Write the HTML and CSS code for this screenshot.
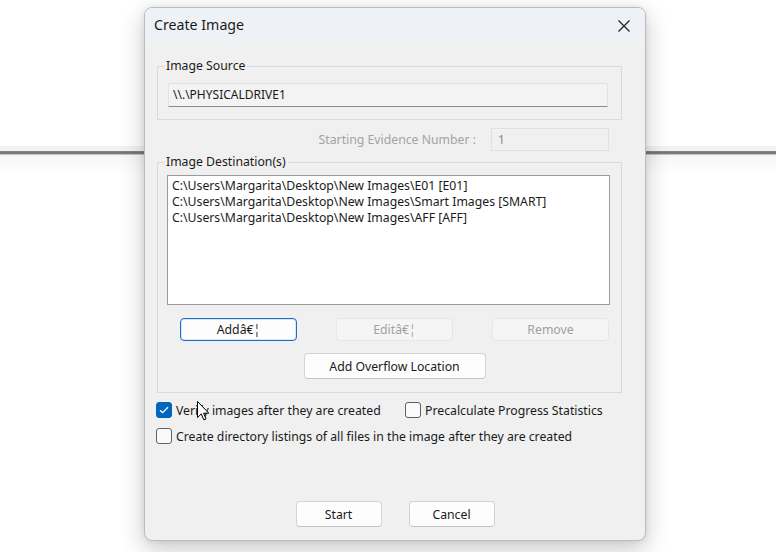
FILE: index.html
```html
<!DOCTYPE html>
<html>
<head>
<meta charset="utf-8">
<title>Create Image</title>
<link rel="stylesheet" href="styles.css">
</head>
<body>
<div class="dialog">
  <div class="titlebar">
    <span class="title">Create Image</span>
    <svg class="close" width="14" height="14" viewBox="0 0 14 14"><path d="M1.5 1.5 L12.5 12.5 M12.5 1.5 L1.5 12.5" stroke="#1f1f1f" stroke-width="1.2" fill="none"/></svg>
  </div>
  <div class="content">
    <fieldset class="group group-source">
      <legend>Image Source</legend>
      <div class="source-inner">
        <div class="textfield">\\.\PHYSICALDRIVE1</div>
      </div>
    </fieldset>
    <div class="evidence-row">
      <span class="evidence-label">Starting Evidence Number :</span>
      <div class="evidence-input">1</div>
    </div>
    <fieldset class="group group-dest">
      <legend>Image Destination(s)</legend>
      <div class="dest-inner">
        <div class="listbox">
          <div class="item">C:\Users\Margarita\Desktop\New Images\E01 [E01]</div>
          <div class="item">C:\Users\Margarita\Desktop\New Images\Smart Images [SMART]</div>
          <div class="item">C:\Users\Margarita\Desktop\New Images\AFF [AFF]</div>
        </div>
        <div class="btn-area">
          <div class="btn-row">
            <div class="btn btn-focus btn-list">Addâ€¦</div>
            <div class="btn btn-disabled btn-list">Editâ€¦</div>
            <div class="btn btn-disabled btn-list">Remove</div>
          </div>
          <div class="overflow-row">
            <div class="btn btn-overflow">Add Overflow Location</div>
          </div>
        </div>
      </div>
    </fieldset>
    <div class="checks">
      <div class="check-row">
        <label class="check check-verify"><span class="box checked"><svg width="10" height="8" viewBox="0 0 10 8"><path d="M1 4.2 L3.6 6.6 L9 1.2" stroke="#fff" stroke-width="1.3" fill="none"/></svg></span><span>Verify images after they are created</span></label>
        <label class="check check-precalc"><span class="box"></span><span>Precalculate Progress Statistics</span></label>
      </div>
      <div class="check-row">
        <label class="check"><span class="box"></span><span>Create directory listings of all files in the image after they are created</span></label>
      </div>
      <svg class="cursor" width="13" height="21" viewBox="0 0 13 21"><path d="M0.5 0.5 L0.5 16.5 L4.3 12.9 L6.8 18.8 L9 17.9 L6.6 12.2 L11.8 12.2 Z" fill="#fff" stroke="#000" stroke-width="1" stroke-linejoin="round"/></svg>
    </div>
    <div class="footer">
      <div class="btn btn-foot">Start</div>
      <div class="btn btn-foot">Cancel</div>
    </div>
  </div>
</div>
</body>
</html>
```
FILE: styles.css
```css
* { box-sizing: border-box; }
html, body { margin: 0; padding: 0; }
body {
  width: 776px;
  height: 552px;
  overflow: hidden;
  font-family: "Noto Sans", "Open Sans", sans-serif;
  font-size: 12px;
  color: #1a1a1a;
  background:
    linear-gradient(to bottom,
      #ffffff 0px, #ffffff 146px,
      #f2f2f2 146px, #f2f2f2 151px,
      #8a8a8a 151px, #6e6e6e 153px, #8a8a8a 154px,
      #f6f6f6 155px, #ffffff 175px, #ffffff 552px);
  padding-top: 7px;
  padding-left: 144px;
}
.dialog {
  width: 502px;
  height: 534px;
  background: #f0f0f0;
  border: 1px solid #bcbcbc;
  border-radius: 8px;
  box-shadow: 0 8px 24px rgba(0,0,0,0.22), 0 0 6px rgba(0,0,0,0.08);
  display: flex;
  flex-direction: column;
  overflow: hidden;
}
.titlebar {
  height: 36px;
  background: #eef1f5;
  display: flex;
  align-items: center;
  justify-content: space-between;
  padding: 0 14px 0 9px;
}
.title {
  font-size: 14.2px;
  color: #1a1a1a;
  padding-bottom: 3px;
}
.close { display: block; margin-top: 0px; }
.content {
  flex: 1;
  display: flex;
  flex-direction: column;
  padding: 14px 0 13px 12px;
}
.group {
  width: 465px;
  margin: 0;
  padding: 0;
  border: 1px solid #dadada;
  min-width: 0;
}
.group legend {
  margin-left: 6px;
  padding: 0 2px;
  line-height: 16px;
  font-size: 12.25px;
  color: #1a1a1a;
}
.source-inner { padding: 9px 13px 12px 10px; }
.textfield {
  height: 24px;
  width: 440px;
  background: #f3f3f3;
  border: 1px solid #e2e2e2;
  border-bottom: 1px solid #8a8a8a;
  border-radius: 3px 3px 0 0;
  padding: 0 0 0 4px;
  line-height: 22px;
  font-size: 12px;
}
.evidence-row {
  width: 465px;
  display: flex;
  justify-content: flex-end;
  align-items: center;
  gap: 15px;
  padding-right: 13px;
  margin-top: 8px;
}
.evidence-label { color: #a3a3a3; font-size: 12.25px; }
.evidence-input {
  width: 118px;
  height: 23px;
  border: 1px solid #e0e0e0;
  background: #f0f0f0;
  color: #8a8a8a;
  line-height: 21px;
  padding-left: 6px;
}
.group-dest { margin-top: 3px; }
.dest-inner { padding: 5px 11px 13px 9px; }
.listbox {
  width: 443px;
  height: 130px;
  background: #ffffff;
  border: 1px solid #9a9a9a;
  padding: 2px 0 0 4px;
}
.item {
  line-height: 16px;
  font-size: 12.25px;
  color: #1a1a1a;
  white-space: nowrap;
}
.btn-area {
  margin-left: 13px;
  width: 429px;
  padding-top: 13px;
}
.btn-row {
  display: flex;
  gap: 39px;
}
.btn {
  display: flex;
  align-items: center;
  justify-content: center;
  background: #fdfdfd;
  border: 1px solid #d3d3d3;
  border-bottom-color: #c4c4c4;
  border-radius: 4px;
  font-size: 12.25px;
  color: #1a1a1a;
}
.btn-list { width: 117px; height: 23px; }
.btn-focus { border: 1px solid #1a6fc9; box-shadow: inset 0 0 0 1px #d8e6f5; background: #fdfdfd; }
.btn-disabled { background: #f5f5f5; border-color: #e6e6e6; color: #a0a0a0; }
.overflow-row {
  display: flex;
  justify-content: center;
  margin-top: 12px;
}
.btn-overflow { width: 182px; height: 26px; }
.checks {
  position: relative;
  margin-top: 4px;
  margin-left: -1px;
}
.check-row {
  display: flex;
  align-items: center;
  height: 26px;
}
.check {
  display: flex;
  align-items: center;
  gap: 4px;
  font-size: 12.25px;
  color: #1a1a1a;
}
.check-verify { width: 249px; }
.box {
  width: 16px;
  height: 16px;
  border: 1px solid #5f5f5f;
  border-radius: 3px;
  background: #f9f9f9;
  display: flex;
  align-items: center;
  justify-content: center;
}
.box.checked { background: #0067c0; border-color: #0067c0; }
.cursor {
  position: absolute;
  left: 41px;
  top: 4px;
}
.footer {
  margin-top: auto;
  display: flex;
  justify-content: center;
  gap: 27px;
  padding-right: 12px;
}
.btn-foot { width: 86px; height: 26px; }
```
